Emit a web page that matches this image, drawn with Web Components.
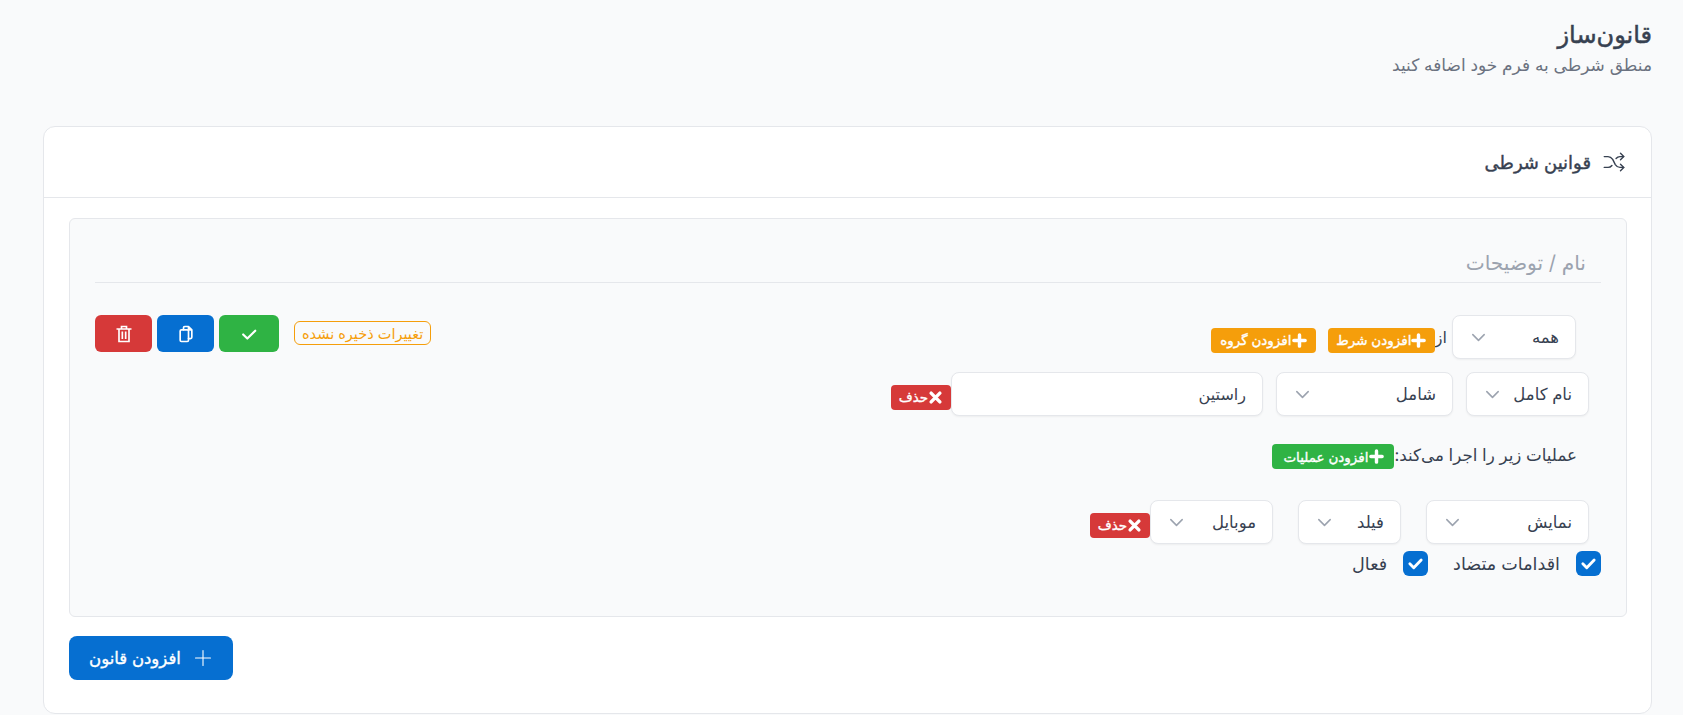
<!DOCTYPE html>
<html lang="fa" dir="rtl">
<head>
<meta charset="utf-8">
<title>قانون‌ساز</title>
<style>
  html, body { margin: 0; padding: 0; }
  body {
    background: #f9fafb;
    color: #374151;
    font-family: Inter, "DejaVu Sans", sans-serif;
    font-size: 16px;
    direction: rtl;
  }
</style>
</head>
<body>
<rule-builder></rule-builder>

<script>
// shared icons
const icons = {
  plus: '<svg viewBox="0 0 24 24" fill="none" stroke="currentColor" stroke-width="5.5" stroke-linecap="round"><path d="M12 3v18M3 12h18"/></svg>',
  close: '<svg viewBox="0 0 24 24" fill="none" stroke="currentColor" stroke-width="5.5" stroke-linecap="round"><path d="M5 5l14 14M19 5L5 19"/></svg>',
  chevron: '<svg viewBox="0 0 20 20" fill="none" stroke="#9ca3af" stroke-width="1.6" stroke-linecap="round" stroke-linejoin="round"><path d="M4 7l6 6 6-6"/></svg>',
};

class RbSelect extends HTMLElement {
  constructor() {
    super();
    this.attachShadow({ mode: 'open' }).innerHTML = `
      <style>
        :host {
          display: flex;
          box-sizing: border-box;
          height: 44px;
          align-items: center;
          justify-content: space-between;
          background: #fff;
          border: 1px solid #e5e7eb;
          border-radius: 8px;
          box-shadow: 0 1px 2px rgba(0, 0, 0, .05);
          padding: 0 16px;
          color: #374151;
          font-size: 16.5px;
        }
        svg { width: 19px; height: 19px; flex: none; }
      </style>
      <slot></slot>${icons.chevron}`;
  }
}
customElements.define('rb-select', RbSelect);

class RbInput extends HTMLElement {
  constructor() {
    super();
    this.attachShadow({ mode: 'open' }).innerHTML = `
      <style>
        :host {
          display: flex;
          box-sizing: border-box;
          height: 44px;
          align-items: center;
          background: #fff;
          border: 1px solid #e5e7eb;
          border-radius: 8px;
          box-shadow: 0 1px 2px rgba(0, 0, 0, .05);
          padding: 0 16px;
          color: #374151;
          font-size: 16px;
        }
      </style>
      <slot></slot>`;
  }
}
customElements.define('rb-input', RbInput);

class RbBadge extends HTMLElement {
  constructor() {
    super();
    const icon = this.getAttribute('icon') || 'plus';
    this.attachShadow({ mode: 'open' }).innerHTML = `
      <style>
        :host {
          display: inline-flex;
          box-sizing: border-box;
          height: 25px;
          align-items: center;
          justify-content: center;
          padding: 0 10px;
          border-radius: 4px;
          color: #fff;
          font-size: 13.5px;
          -webkit-text-stroke: .35px #fff;
          white-space: nowrap;
        }
        :host([tone=amber]) { background: #f59e0b; }
        :host([tone=green]) { background: #2fb344; }
        :host([tone=red]) { background: #d63939; }
        svg { width: 15px; height: 15px; flex: none; }
      </style>
      ${icons[icon]}<slot></slot>`;
  }
}
customElements.define('rb-badge', RbBadge);

class RbCheck extends HTMLElement {
  constructor() {
    super();
    this.attachShadow({ mode: 'open' }).innerHTML = `
      <style>
        :host {
          display: inline-flex;
          align-items: center;
          gap: 16px;
          color: #374151;
          font-size: 17.6px;
        }
        .box {
          width: 25px;
          height: 25px;
          border-radius: 6px;
          background: #066fd1;
          display: flex;
          align-items: center;
          justify-content: center;
        }
        svg { width: 17px; height: 17px; }
      </style>
      <span class="box">
        <svg viewBox="0 0 24 24" fill="none" stroke="#fff" stroke-width="4" stroke-linecap="round" stroke-linejoin="round"><path d="M4 12.5l5.5 5.5L20 7"/></svg>
      </span>
      <slot></slot>`;
  }
}
customElements.define('rb-check', RbCheck);

class RbAction extends HTMLElement {
  constructor() {
    super();
    this.attachShadow({ mode: 'open' }).innerHTML = `
      <style>
        :host {
          display: flex;
          box-sizing: border-box;
          height: 37px;
          width: 57px;
          align-items: center;
          justify-content: center;
          border-radius: 6px;
          color: #fff;
        }
        :host([tone=green]) { background: #2fb344; width: 60px; }
        :host([tone=blue]) { background: #066fd1; }
        :host([tone=red]) { background: #d63939; }
        ::slotted(svg) { width: 20px; height: 20px; }
      </style>
      <slot></slot>`;
  }
}
customElements.define('rb-action', RbAction);

class RbCard extends HTMLElement {
  constructor() {
    super();
    this.attachShadow({ mode: 'open' }).innerHTML = `
      <style>
        :host {
          display: block;
          box-sizing: border-box;
          background: #fff;
          border: 1px solid #e5e7eb;
          border-radius: 12px;
        }
        header {
          height: 71px;
          box-sizing: border-box;
          border-bottom: 1px solid #e5e7eb;
          display: flex;
          align-items: center;
          gap: 10px;
          padding: 0 24px;
          color: #374151;
          font-size: 18px;
          -webkit-text-stroke: .4px #374151;
        }
        svg { width: 26px; height: 26px; flex: none; -webkit-text-stroke: 0; }
        .body { padding: 20px 24px 32px 25px; }
      </style>
      <header>
        <svg viewBox="0 0 24 24" fill="none" stroke="currentColor" stroke-width="1.3" stroke-linecap="round" stroke-linejoin="round">
          <path d="M3 7h3.5c2 0 3.2 1 4.3 2.6l2.4 4.8c1.1 1.6 2.3 2.6 4.3 2.6H21"/>
          <path d="M3 17h3.5c1.6 0 2.7-.7 3.6-1.8M13.900 8.800C14.800 7.700 15.900 7 17.500 7H21"/>
          <path d="M18 4l3 3-3 3M18 14l3 3-3 3"/>
        </svg>
        <slot name="title"></slot>
      </header>
      <div class="body"><slot></slot></div>`;
  }
}
customElements.define('rb-card', RbCard);

class RuleBuilder extends HTMLElement {
  constructor() {
    super();
    this.attachShadow({ mode: 'open' }).innerHTML = `
      <style>
        :host {
          display: block;
          box-sizing: border-box;
          min-height: 715px;
          padding: 20px 31px 0 31px;
          color: #374151;
        }
        h1 {
          margin: 0;
          font-size: 24px;
          line-height: 30px;
          font-weight: 400;
          -webkit-text-stroke: .5px #374151;
          color: #374151;
        }
        .sub { margin: 0; font-size: 17px; line-height: 30px; color: #6b7280; }
        rb-card { margin-top: 46px; margin-left: 12px; height: 588px; }
        .rule {
          box-sizing: border-box;
          height: 399px;
          background: #f9fafb;
          border: 1px solid #e5e7eb;
          border-radius: 6px;
          padding: 24px 25px;
        }
        .name {
          box-sizing: border-box;
          height: 40px;
          border-bottom: 1px solid #e5e7eb;
          padding: 0 15px;
          display: flex;
          align-items: center;
          font-size: 20.2px;
          color: #9ca3af;
        }
        .top { display: flex; justify-content: space-between; margin-top: 32px; }
        .when { display: flex; align-items: center; padding-right: 25px; height: 44px; }
        .when span { margin: 0 5px 0 0; }
        .when rb-badge { margin-top: 6px; }
        .when rb-badge + rb-badge { margin-right: 12px; }
        .tools { display: flex; align-items: flex-start; gap: 5px; direction: ltr; }
        .tools em {
          font-style: normal;
          font-size: 14.5px;
          color: #f59e0b;
          border: 1px solid #f59e0b;
          border-radius: 6px;
          height: 24px;
          box-sizing: border-box;
          display: flex;
          align-items: center;
          padding: 0 7px;
          margin: 6px 0 0 10px;
          direction: rtl;
          white-space: nowrap;
          order: 4;
        }
        .row { display: flex; align-items: center; padding-right: 12px; gap: 13px; }
        .row rb-badge { margin-right: -13px; margin-top: 6px; }
        .actions { display: flex; align-items: center; padding-right: 24px; height: 25px; margin-top: 26px; font-size: 16.7px; }
        .actions rb-badge { margin-top: 4px; }
        .checks { display: flex; align-items: center; gap: 25px; margin-top: 7px; }
      </style>
      <h1>قانون‌ساز</h1>
      <p class="sub">منطق شرطی به فرم خود اضافه کنید</p>
      <rb-card>
        <span slot="title">قوانین شرطی</span>
        <div class="rule">
          <div class="name">نام / توضیحات</div>
          <div class="top">
            <div class="when">
              <rb-select style="width:124px">همه</rb-select>
              <span>از</span>
              <rb-badge tone="amber" style="width:107px">افزودن شرط</rb-badge>
              <rb-badge tone="amber" style="width:105px">افزودن گروه</rb-badge>
            </div>
            <div class="tools">
              <rb-action tone="red"><svg viewBox="0 0 24 24" fill="none" stroke="currentColor" stroke-width="2" stroke-linecap="square" stroke-linejoin="miter"><path d="M4 6h16M9 6V3h6v3M6 6v15h12V6M10 10v7M14 10v7"/></svg></rb-action>
              <rb-action tone="blue"><svg viewBox="0 0 24 24" fill="none" stroke="currentColor" stroke-width="2" stroke-linecap="round" stroke-linejoin="round"><rect x="5" y="7" width="10" height="14" rx="1.500"/><path d="M9 7V4.500A1.500 1.500 0 0 1 10.500 3H15l4 4v9a1.500 1.500 0 0 1-1.500 1.500H15M15 3v4h4"/></svg></rb-action>
              <rb-action tone="green"><svg viewBox="0 0 24 24" fill="none" stroke="currentColor" stroke-width="2.600" stroke-linecap="round" stroke-linejoin="round"><path d="M5 12.500l5 5L19.500 8"/></svg></rb-action>
              <em>تغییرات ذخیره نشده</em>
            </div>
          </div>
          <div class="row" style="margin-top:13px">
            <rb-select style="width:123px">نام کامل</rb-select>
            <rb-select style="width:177px">شامل</rb-select>
            <rb-input style="width:312px">راستین</rb-input>
            <rb-badge tone="red" icon="close" style="width:60px">حذف</rb-badge>
          </div>
          <div class="actions">
            <span>عملیات زیر را اجرا می‌کند:</span>
            <rb-badge tone="green" style="width:122px">افزودن عملیات</rb-badge>
          </div>
          <div class="row" style="margin-top:33px;gap:25px">
            <rb-select style="width:163px">نمایش</rb-select>
            <rb-select style="width:103px">فیلد</rb-select>
            <rb-select style="width:123px">موبایل</rb-select>
            <rb-badge tone="red" icon="close" style="width:60px;margin-right:-25px">حذف</rb-badge>
          </div>
          <div class="checks">
            <rb-check>اقدامات متضاد</rb-check>
            <rb-check>فعال</rb-check>
          </div>
        </div>
        <rb-btn-add></rb-btn-add>
      </rb-card>`;
  }
}

class RbBtnAdd extends HTMLElement {
  constructor() {
    super();
    this.attachShadow({ mode: 'open' }).innerHTML = `
      <style>
        :host {
          display: inline-flex;
          box-sizing: border-box;
          margin-top: 19px;
          width: 164px;
          height: 44px;
          align-items: center;
          justify-content: center;
          gap: 12px;
          border-radius: 8px;
          background: #066fd1;
          color: #fff;
          font-size: 16.5px;
          -webkit-text-stroke: .35px #fff;
          float: left;
        }
        svg { width: 20px; height: 20px; }
      </style>
      <svg viewBox="0 0 24 24" fill="none" stroke="currentColor" stroke-width="1.300" stroke-linecap="round"><path d="M12 3v18M3 12h18"/></svg>
      <span>افزودن قانون</span>`;
  }
}
customElements.define('rb-btn-add', RbBtnAdd);
customElements.define('rule-builder', RuleBuilder);
</script>
</body>
</html>
